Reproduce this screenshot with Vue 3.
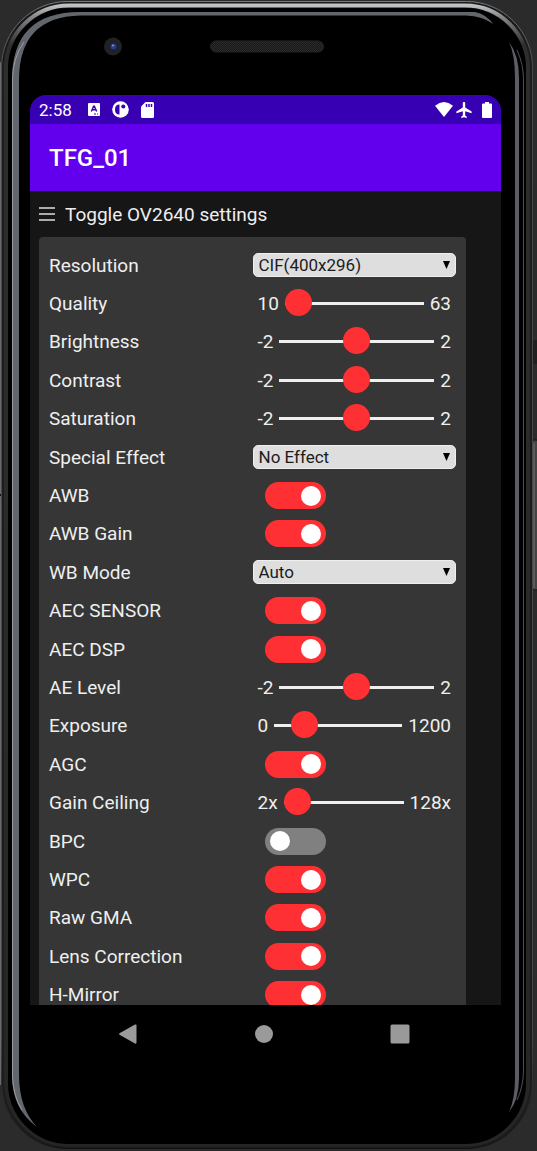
<script setup>
import { reactive, ref } from 'vue'

const open = ref(true)

const settings = reactive([
  { id: 'framesize', label: 'Resolution', type: 'select', value: 'CIF(400x296)', options: ['CIF(400x296)'] },
  { id: 'quality', label: 'Quality', type: 'range', min: 10, max: 63, value: 10 },
  { id: 'brightness', label: 'Brightness', type: 'range', min: -2, max: 2, value: 0 },
  { id: 'contrast', label: 'Contrast', type: 'range', min: -2, max: 2, value: 0 },
  { id: 'saturation', label: 'Saturation', type: 'range', min: -2, max: 2, value: 0 },
  { id: 'effect', label: 'Special Effect', type: 'select', value: 'No Effect', options: ['No Effect'] },
  { id: 'awb', label: 'AWB', type: 'switch', value: true },
  { id: 'awb-gain', label: 'AWB Gain', type: 'switch', value: true },
  { id: 'wb-mode', label: 'WB Mode', type: 'select', value: 'Auto', options: ['Auto'] },
  { id: 'aec', label: 'AEC SENSOR', type: 'switch', value: true },
  { id: 'aec2', label: 'AEC DSP', type: 'switch', value: true },
  { id: 'ae-level', label: 'AE Level', type: 'range', min: -2, max: 2, value: 0 },
  { id: 'aec-value', label: 'Exposure', type: 'range', min: 0, max: 1200, value: 204 },
  { id: 'agc', label: 'AGC', type: 'switch', value: true },
  { id: 'gain-ceiling', label: 'Gain Ceiling', type: 'range', min: 0, max: 6, value: 0, low: '2x', high: '128x' },
  { id: 'bpc', label: 'BPC', type: 'switch', value: false },
  { id: 'wpc', label: 'WPC', type: 'switch', value: true },
  { id: 'raw-gma', label: 'Raw GMA', type: 'switch', value: true },
  { id: 'lenc', label: 'Lens Correction', type: 'switch', value: true },
  { id: 'hmirror', label: 'H-Mirror', type: 'switch', value: true },
])
</script>

<template>
  <div class="phone">
    <svg class="frame" viewBox="0 0 537 1151" preserveAspectRatio="none" aria-hidden="true">
      <defs>
        <linearGradient id="edge" x1="0" y1="0" x2="0" y2="1">
          <stop offset="0" stop-color="#77797b" />
          <stop offset="0.06" stop-color="#4a4a4a" />
          <stop offset="0.9" stop-color="#474747" />
          <stop offset="1" stop-color="#111" />
        </linearGradient>
        <linearGradient id="shine" x1="0" y1="0" x2="0" y2="1">
          <stop offset="0" stop-color="#bfc2c4" />
          <stop offset="0.01" stop-color="#85878a" />
          <stop offset="0.035" stop-color="#2e2e2e" />
          <stop offset="1" stop-color="#262626" />
        </linearGradient>
        <pattern id="mesh" width="2" height="2" patternUnits="userSpaceOnUse">
          <rect width="2" height="2" fill="#151716" />
          <rect width="1" height="1" fill="#2c2e2d" />
          <rect x="1" y="1" width="1" height="1" fill="#2c2e2d" />
        </pattern>
      </defs>
      <path d="M0 62V1085" stroke="#6a6a6a" stroke-width="2" />
      <path d="M0 495H3" stroke="#111" stroke-width="2" />
      <rect x="533" y="340" width="4" height="24" fill="#202020" />
      <path d="M532.500 364V370" stroke="#888" />
      <rect x="532" y="440" width="6" height="150" rx="2" fill="#454545" stroke="#151515" />
      <path d="M534 443V588" stroke="#707070" />
      <rect x="1.500" y="1.500" width="531" height="1147" rx="66" fill="#1c1c1c" stroke="url(#edge)" />
      <rect x="6" y="5.500" width="522" height="1139" rx="63" fill="none" stroke="url(#shine)" stroke-width="4" />
      <rect x="9" y="9" width="516" height="1134" rx="60" fill="#000" stroke="#000" stroke-width="2" />
      <path d="M517 50Q523.500 64 523.500 80V1070Q523.500 1086 517 1100" fill="none" stroke="#505050" />
      <path d="M80 12H475Q486 14 493 24Q483 16 466 15.500H80Q19 17 19 80V1075Q19 1108 37 1127Q12 1109 12 1075V80Q12 12 80 12Z" fill="#62666d" />
      <path d="M24 42Q12.500 58 12.500 80V1075Q13 1096 22 1110" fill="none" stroke="#9a9da3" />
      <path d="M509 42Q519 55 519 78V1078Q519 1100 509 1112Q515 1099 515 1078V78Q515 55 509 42Z" fill="#5c5d65" />
      <circle cx="113" cy="46.500" r="9" fill="#222223" />
      <circle cx="113.500" cy="46.500" r="5" fill="#17203f" />
      <circle cx="113.500" cy="46.500" r="3" fill="#2d3c78" />
      <circle cx="113" cy="45.500" r="1" fill="#8c9cc4" />
      <rect x="210.500" y="41" width="113" height="11" rx="5.500" fill="url(#mesh)" stroke="#222423" />
    </svg>

    <main class="screen">
      <div class="status">
        <span class="time">2:58</span>
        <svg class="s-a" viewBox="0 0 12 13" aria-hidden="true">
          <rect width="12" height="13" rx="1" fill="#fff" />
          <path d="M3.300 8.500L5.600 3.200H6.400L8.700 8.500M4.400 6.800H7.600" fill="none" stroke="#3700b3" stroke-width="1.400" />
          <path d="M6 11H8M9 11H10" stroke="#3700b3" />
        </svg>
        <svg class="s-p" viewBox="0 0 17 17" aria-hidden="true">
          <circle cx="8.500" cy="8.500" r="8.300" fill="#fff" />
          <path d="M7.500 3.500V13.500Q3 13.500 3 8.500T7.500 3.500Z" fill="#3700b3" />
          <circle cx="11.300" cy="5.500" r="2" fill="#3700b3" />
        </svg>
        <svg class="s-sd" viewBox="0 0 13 16" aria-hidden="true">
          <path d="M4.500 0H11.500Q13 0 13 1.500V14.500Q13 16 11.500 16H1.500Q0 16 0 14.500V4.500Z" fill="#fff" />
          <path d="M5.500 2V5M8 2V5M10.500 2V5" stroke="#3700b3" stroke-width="1.500" />
        </svg>
        <span class="grow"></span>
        <svg class="s-wifi" viewBox="0 0 18 15" aria-hidden="true">
          <path d="M0 3.800Q9 -3.600 18 3.800L9 15Z" fill="#fff" />
        </svg>
        <svg class="s-air" viewBox="2 2 19 20" aria-hidden="true">
          <path d="M21 16v-2l-8-5V3.500C13 2.670 12.330 2 11.500 2S10 2.670 10 3.500V9l-8 5v2l8-2.500V19l-2 1.500V22l3.500-1 3.500 1v-1.500L13 19v-5.500Z" fill="#fff" />
        </svg>
        <svg class="s-bat" viewBox="0 0 10 16" aria-hidden="true">
          <path d="M3 0H7V1.500H9Q10 1.500 10 2.500V15Q10 16 9 16H1Q0 16 0 15V2.500Q0 1.500 1 1.500H3Z" fill="#fff" />
        </svg>
      </div>

      <header class="appbar"><h1>TFG_01</h1></header>

      <div class="content">
        <button class="toggle" type="button" :aria-expanded="open" @click="open = !open">
          <svg viewBox="0 0 16 16" aria-hidden="true">
            <path d="M0 2H16M0 8H16M0 14H16" stroke="#dedede" stroke-width="1.500" />
          </svg>
          <span>Toggle OV2640 settings</span>
        </button>

        <div v-if="open" class="panel">
          <div v-for="s in settings" :key="s.id" class="row">
            <label :for="s.id">{{ s.label }}</label>
            <div v-if="s.type === 'select'" class="pick">
              <select :id="s.id" v-model="s.value">
                <option v-for="o in s.options" :key="o">{{ o }}</option>
              </select>
              <svg class="arrow" viewBox="0 0 7 8" aria-hidden="true"><path d="M0 0H7L3.500 8Z" /></svg>
            </div>
            <div v-else-if="s.type === 'range'" class="slider">
              <span>{{ s.low ?? s.min }}</span>
              <input :id="s.id" v-model.number="s.value" type="range" :min="s.min" :max="s.max" />
              <span>{{ s.high ?? s.max }}</span>
            </div>
            <input v-else :id="s.id" v-model="s.value" class="switch" type="checkbox" role="switch" />
          </div>
        </div>
      </div>
    </main>

    <nav class="nav">
      <button type="button" aria-label="Back">
        <svg viewBox="0 0 20 20"><path d="M1.500 9.200L17 0.500Q18.500 0 18.500 1.500V18.500Q18.500 20 17 19.500L1.500 10.800Q0.500 10 1.500 9.200Z" /></svg>
      </button>
      <button type="button" aria-label="Home">
        <svg viewBox="0 0 20 20"><circle cx="10" cy="10" r="9" /></svg>
      </button>
      <button type="button" aria-label="Recents">
        <svg viewBox="0 0 20 20"><rect x="0.500" y="0.500" width="19" height="19" rx="1.500" /></svg>
      </button>
    </nav>
  </div>
</template>

<style>
body {
  background: #2b2b2b;
}
</style>

<style scoped>
* {
  box-sizing: border-box;
}
.phone {
  position: relative;
  display: flex;
  flex-direction: column;
  height: 100vh;
  padding: 95px 36px 89px 30px;
  background: #2b2b2b;
  font-family: Roboto, "Liberation Sans", sans-serif;
  font-size: 19px;
  color: #efefef;
}
.frame {
  position: absolute;
  inset: 0;
  width: 100%;
  height: 100%;
}
.screen {
  position: relative;
  flex: 1;
  min-height: 0;
  display: flex;
  flex-direction: column;
  overflow: hidden;
  background: #161616;
  border-radius: 16px 16px 0 0;
}
.status {
  flex: none;
  display: flex;
  align-items: center;
  height: 29px;
  padding: 0 9px;
  background: #3700b3;
  color: #fff;
}
.time {
  font-size: 17px;
  margin-right: 16px;
}
.grow {
  flex: 1;
}
.s-a { width: 12px; height: 13px; margin-right: 12px; }
.s-p { width: 17px; height: 17px; margin-right: 12px; }
.s-sd { width: 13px; height: 16px; }
.s-wifi { width: 18px; height: 15px; margin-right: 3px; }
.s-air { width: 16px; height: 16px; margin-right: 10px; }
.s-bat { width: 10px; height: 16px; }
.appbar {
  flex: none;
  display: flex;
  align-items: center;
  height: 67px;
  padding: 0 19px;
  background: #6200ee;
}
h1 {
  margin: 0;
  font-size: 24px;
  font-weight: 500;
  color: #fff;
}
.content {
  flex: 1;
  min-height: 0;
  display: flex;
  flex-direction: column;
  padding: 0 35px 0 9px;
}
.toggle {
  flex: none;
  display: flex;
  align-items: center;
  gap: 10px;
  height: 46px;
  padding: 0;
  border: 0;
  background: none;
  font: inherit;
  color: inherit;
}
.toggle svg {
  width: 16px;
  height: 16px;
}
.panel {
  flex: 1;
  display: grid;
  grid-auto-rows: 1fr;
  margin-bottom: -9px;
  padding: 9px 10px 0;
  background: #363636;
  border-radius: 4px 4px 0 0;
}
.row {
  display: grid;
  grid-template-columns: minmax(0, 1fr) minmax(0, 1fr);
  align-items: center;
  min-height: 38px;
}
.pick {
  position: relative;
  display: flex;
}
select {
  appearance: none;
  width: 100%;
  height: 24px;
  padding: 0 5px;
  border: 1px solid #efefef;
  border-radius: 5px;
  background: #dedede;
  font: 17px/22px Roboto, sans-serif;
  color: #1c1c1c;
}
.arrow {
  position: absolute;
  right: 6px;
  top: 8px;
  width: 7px;
  height: 8px;
  pointer-events: none;
}
.slider {
  display: flex;
  align-items: center;
  gap: 6px;
  padding: 0 5px;
}
input[type="range"] {
  appearance: none;
  flex: 1;
  min-width: 0;
  height: 27px;
  margin: 0;
  background: none;
}
input[type="range"]::-webkit-slider-runnable-track {
  height: 3px;
  background: #efefef;
}
input[type="range"]::-webkit-slider-thumb {
  appearance: none;
  width: 27px;
  height: 27px;
  margin-top: -13px;
  border-radius: 50%;
  background: #ff3034;
}
.switch {
  appearance: none;
  display: flex;
  align-items: center;
  width: 61px;
  height: 27px;
  margin: 0 0 0 12px;
  padding: 0 5px;
  border-radius: 14px;
  background: #808080;
}
.switch::before {
  content: "";
  width: 20px;
  height: 20px;
  border-radius: 50%;
  background: #fff;
}
.switch:checked {
  justify-content: flex-end;
  background: #ff3034;
}
.nav {
  position: relative;
  flex: none;
  display: flex;
  justify-content: space-between;
  align-items: center;
  height: 57px;
  padding: 0 91px 0 88px;
}
.nav button {
  display: flex;
  padding: 0;
  border: 0;
  background: none;
}
.nav svg {
  width: 20px;
  height: 20px;
  fill: #9a9a9a;
}
</style>
